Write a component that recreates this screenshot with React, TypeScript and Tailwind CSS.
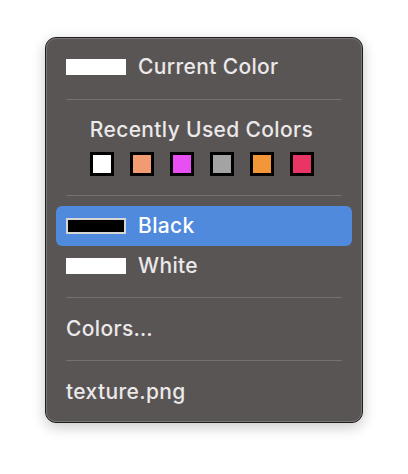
import React from "react";

const recent = ["#ffffff", "#f29a72", "#e84ef2", "#a3a3a3", "#f29638", "#e93566"];

function Sep() {
  return <div className="mx-[10px] h-px bg-[#767171]" />;
}

function Row({
  label,
  swatch,
  active,
  swatchClass,
}: {
  label: string;
  swatch?: boolean;
  active?: boolean;
  swatchClass?: string;
}) {
  return (
    <div
      className={`flex h-10 items-center gap-3 rounded-[6px] px-[10px] ${
        active ? "bg-[#4f8add] text-white" : "text-[#ebe9e9]"
      }`}
    >
      {swatch && <div className={`h-4 w-[60px] shrink-0 ${swatchClass}`} />}
      <span className="leading-6">{label}</span>
    </div>
  );
}

export default function App() {
  return (
    <div
      className="min-h-[474px] w-full bg-white pt-[37px]"
      style={{ fontFamily: "Inter, 'Noto Sans', sans-serif" }}
    >
      <div className="mx-auto w-[318px] rounded-[11px] border border-[#1e1c1c] bg-[#5a5555] text-[21px] font-medium tracking-[0.35px] shadow-[0_4px_14px_rgba(0,0,0,0.22)]">
        <div className="rounded-[10px] border border-[#7a7676] px-[9px] pb-[9px] pt-[8px]">
          <Row label="Current Color" swatch swatchClass="bg-white" />
          <div className="h-[12px]" />
          <Sep />
          <div className="flex flex-col items-center pt-[18px] pb-[19px] pr-[5px]">
            <span className="leading-6 text-[#ebe9e9]">Recently Used Colors</span>
            <div className="mt-[10px] flex gap-4">
              {recent.map((c) => (
                <div
                  key={c}
                  className="h-6 w-6 border-[3px] border-black"
                  style={{ backgroundColor: c }}
                />
              ))}
            </div>
          </div>
          <Sep />
          <div className="h-[10px]" />
          <Row
            label="Black"
            swatch
            active
            swatchClass="bg-black border-2 border-[#d6d6d6]"
          />
          <Row label="White" swatch swatchClass="bg-white" />
          <div className="h-[11px]" />
          <Sep />
          <div className="h-[11px]" />
          <Row label="Colors…" />
          <div className="h-[11px]" />
          <Sep />
          <div className="h-[11px]" />
          <Row label="texture.png" />
        </div>
      </div>
    </div>
  );
}
